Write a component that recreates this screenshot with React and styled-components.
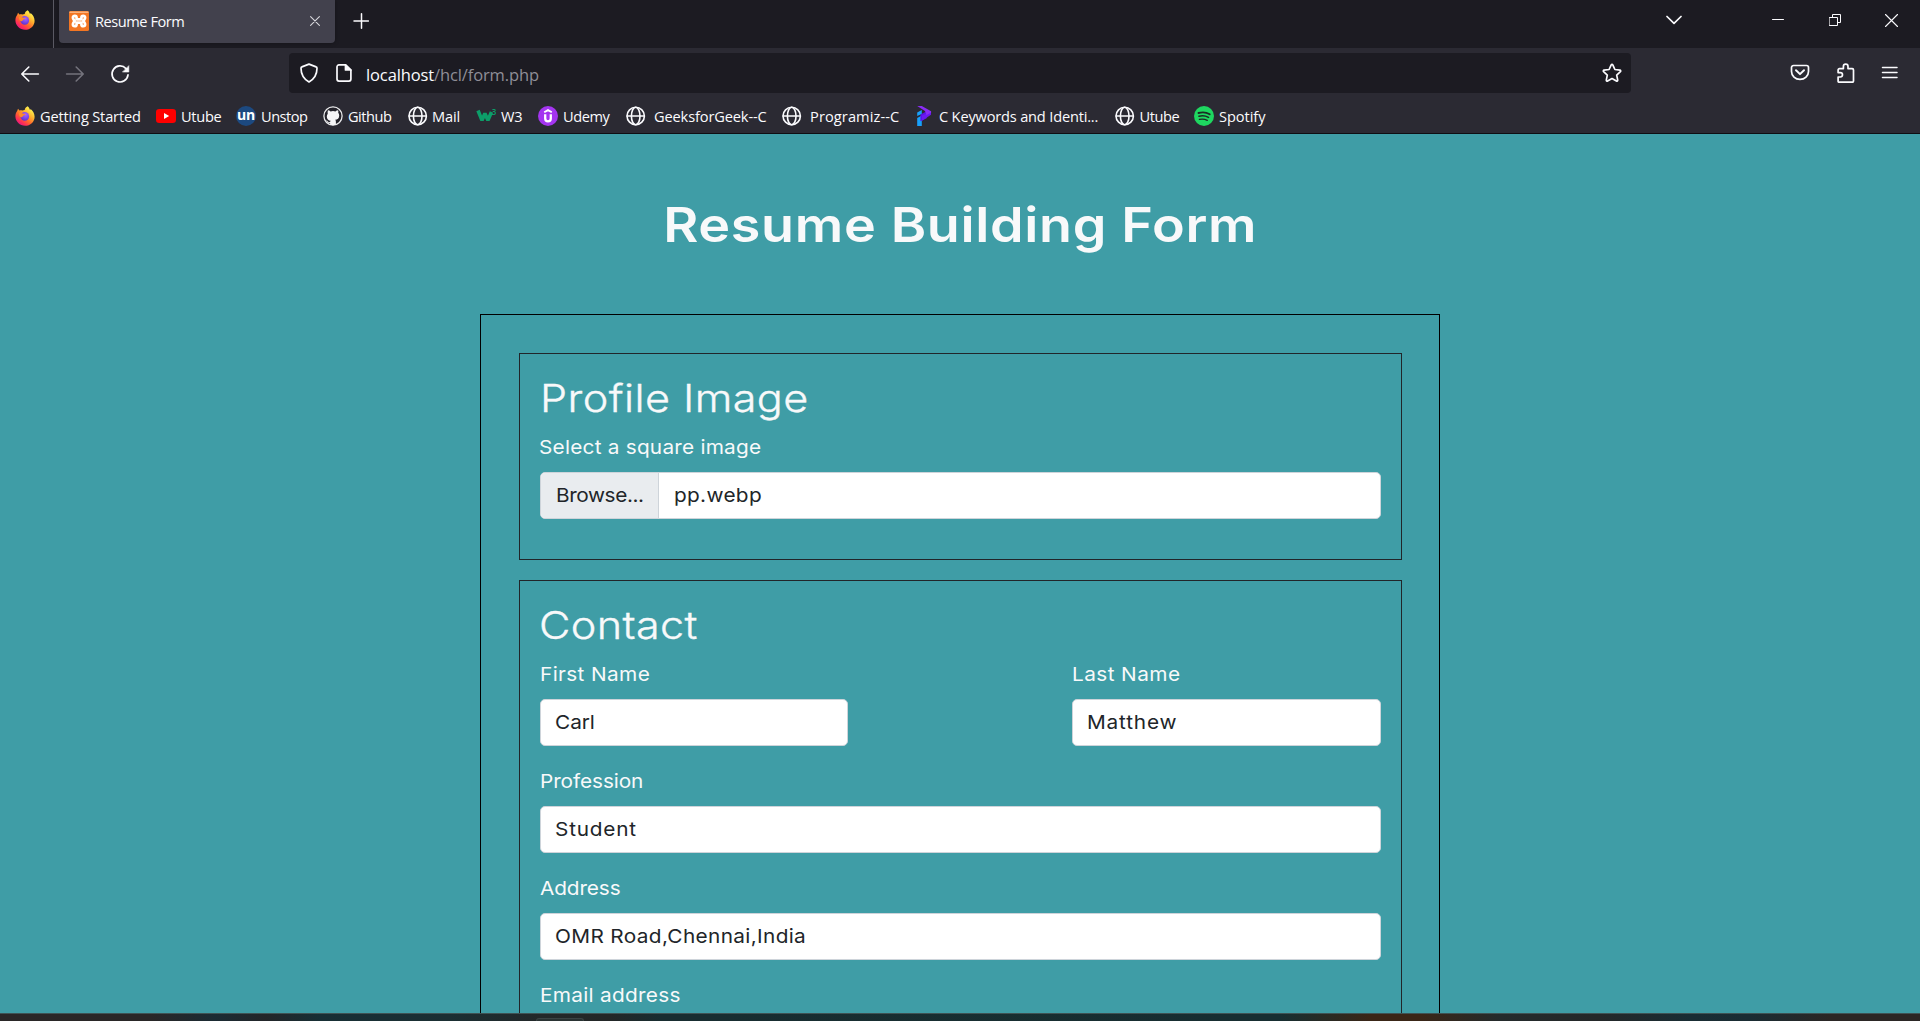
import React from "react";
import styled, { createGlobalStyle } from "styled-components";

const GlobalStyle = createGlobalStyle`
  *, *::before, *::after { box-sizing: border-box; }
  body { margin: 0; overflow: hidden; background: #3f9da6; }
`;

const Screen = styled.div`
  display: flex;
  flex-direction: column;
  width: 1920px;
  height: 1021px;
  overflow: hidden;
  font-family: "Open Sans", "Noto Sans", sans-serif;
  color: #fbfbfe;
`;

const Icon = styled.svg`
  display: block;
  flex: none;
  width: ${(p) => p.$w || 20}px;
  height: ${(p) => p.$h || p.$w || 20}px;
  fill: none;
  stroke: ${(p) => p.$color || "#fbfbfe"};
  stroke-width: ${(p) => p.$stroke || 1.6};
  stroke-linecap: round;
  stroke-linejoin: round;
`;

/* ---------- browser chrome ---------- */

const TabBar = styled.header`
  display: flex;
  flex: none;
  height: 48px;
  background: #1c1b22;
`;

const PinnedTab = styled.div`
  display: flex;
  width: 54px;
  padding: 10px 0 0 15px;
  border-right: 1px solid #5a5963;
`;

const Tab = styled.div`
  display: flex;
  align-items: center;
  width: 276px;
  height: 43px;
  margin-left: 5px;
  padding: 0 15px 1px 10px;
  border-radius: 0 0 4px 4px;
  background: #42414d;
  box-shadow: 0 0 4px rgba(0, 0, 0, 0.35);
`;

const TabTitle = styled.span`
  flex: 1;
  margin-left: 6px;
  font-size: 14.6px;
  letter-spacing: -0.458px;
  line-height: 24px;
  white-space: nowrap;
`;

const NewTab = styled.div`
  flex: 1;
  padding: 13px 0 0 18px;
`;

const WindowControls = styled.div`
  display: flex;
  align-items: center;
  height: 40px;
  padding-right: 22px;
`;

const ControlSlot = styled.div`
  margin-right: ${(p) => p.$gap || 0}px;
`;

const NavBar = styled.nav`
  display: flex;
  flex: none;
  align-items: center;
  height: 50px;
  padding-left: 20px;
  background: #2b2a33;
`;

const NavButtons = styled.div`
  display: flex;
  gap: 25px;
  width: 269px;
  padding-top: 2px;
`;

const UrlBar = styled.div`
  display: flex;
  align-items: center;
  width: 1342px;
  height: 40px;
  padding: 0 9px 0 10px;
  border-radius: 4px;
  background: #1c1b22;
`;

const PageIcon = styled.div`
  margin: 0 13px 0 16px;
`;

const Url = styled.div`
  flex: 1;
  padding-top: 3px;
  font-size: 16.5px;
  line-height: 24px;
  letter-spacing: -0.12px;
  color: #8f8e97;
  white-space: nowrap;
`;

const Host = styled.span`
  color: #fbfbfe;
`;

const NavActions = styled.div`
  display: flex;
  align-items: center;
  gap: 25.5px;
  margin-left: 159px;
`;

const Bookmarks = styled.div`
  display: flex;
  flex: none;
  align-items: center;
  height: 36px;
  padding-left: 15px;
  background: #2b2a33;
  border-bottom: 1px solid #0f0e13;
`;

const BookmarkItem = styled.div`
  display: flex;
  align-items: center;
  flex: none;
  width: ${(p) => p.$width}px;
`;

const BookmarkLabel = styled.span`
  margin-left: ${(p) => p.$indent || 5}px;
  font-size: 14.6px;
  line-height: 24px;
  letter-spacing: ${(p) => p.$spacing}px;
  white-space: nowrap;
`;

/* ---------- web page ---------- */

const Page = styled.main`
  display: flex;
  flex-direction: column;
  align-items: center;
  flex: none;
  height: 879px;
  overflow: hidden;
  background: #3f9da6;
  color: #f8f9fa;
  font-family: Inter, sans-serif;
  font-size: 19.25px;
  font-weight: 400;
  line-height: 30px;
`;

const Wide = styled.span`
  display: inline-block;
  margin-left: ${(p) => p.$shift || 0}px;
  transform: scaleX(${(p) => p.$stretch || 1.08});
  transform-origin: ${(p) => p.$origin || "left"};
  letter-spacing: ${(p) => p.$spacing || 0}px;
  white-space: nowrap;
`;

const PageTitle = styled.h1`
  margin: 0;
  padding: 61px 0 59px;
  font-size: 48.1px;
  font-weight: 600;
  line-height: 60px;
`;

const FormFrame = styled.form`
  flex: none;
  width: 960px;
  height: 1200px;
  padding: 38px 37px 38px 38px;
  border: 1px solid #000;
`;

const Section = styled.section`
  height: ${(p) => (p.$height ? p.$height + "px" : "auto")};
  margin-bottom: 20px;
  padding: 20px;
  border: 1px solid #212529;
`;

const SectionTitle = styled.h2`
  margin: 0 0 10px;
  font-size: 38.5px;
  font-weight: 300;
  line-height: 48px;
  -webkit-text-stroke: 0.35px #f8f9fa;
`;

const NameRow = styled.div`
  display: flex;
  justify-content: space-between;
`;

const Field = styled.div`
  width: ${(p) => p.$width || "100%"};
  margin-bottom: 20px;
`;

const Label = styled.label`
  display: block;
  margin-bottom: 10px;
`;

const Control = styled.div`
  display: flex;
  height: 47px;
  border: 1px solid #ced4da;
  border-radius: 5px;
  background: #fff;
  color: #212529;
  overflow: hidden;
`;

const Value = styled.div`
  padding: 7px 15px 8px;
`;

const BrowseButton = styled.div`
  width: 118px;
  padding: 7px 15px 8px;
  border-right: 1px solid #ced4da;
  background: #e9ecef;
`;

const Taskbar = styled.footer`
  flex: none;
  height: 8px;
  padding-left: 536px;
  border-top: 1px solid #3f5354;
  background: linear-gradient(
    90deg,
    #2a2727 0, #292727 150px, #1b2b33 215px, #232629 265px, #172f35 320px, #1b2f33 450px,
    #232829 540px, #232727 610px, #182d30 660px, #172e31 1280px, #3a2617 1370px,
    #3a2617 1420px, #242b2c 1500px, #242829 1600px, #192d34 1690px, #1a2c33 1750px,
    #2b2725 1830px, #2b2725 1920px
  );
`;

const TaskbarButton = styled.div`
  width: 48px;
  height: 3px;
  margin-top: 4px;
  border: 1px solid #3b4444;
  border-bottom: 0;
  border-radius: 4px 4px 0 0;
  background: #2a3333;
`;

/* ---------- icons ---------- */

function Firefox({ id }) {
  return (
    <Icon viewBox="0 0 20 20" $color="none">
      <defs>
        <linearGradient id={id + "a"} x1="0.85" y1="0.1" x2="0.2" y2="0.95">
          <stop offset="0.05" stopColor="#fff44f" />
          <stop offset="0.35" stopColor="#ffb02e" />
          <stop offset="0.6" stopColor="#ff6a2b" />
          <stop offset="0.82" stopColor="#ff2f55" />
          <stop offset="1" stopColor="#e31587" />
        </linearGradient>
        <radialGradient id={id + "b"} cx="0.6" cy="0.3" r="0.8">
          <stop offset="0" stopColor="#a964ff" />
          <stop offset="0.6" stopColor="#7542e5" />
          <stop offset="1" stopColor="#5a2fc0" />
        </radialGradient>
      </defs>
      <path
        fill={`url(#${id}a)`}
        d="M12.6 0.2C13.9 1.2 14.6 2.6 15 4c.5-.1.6-.5.6-.9 2.200 1.800 4 4.600 4 7.600 0 5.200-4.300 9.100-9.500 9.100S.4 15.600.4 10.300c0-2.300.7-4.100 1.900-5.600.1-.9.5-1.500 1-2 .2.900.6 1.400 1.100 1.700 1-.3 2-.2 2.900.2.900-.5 1.500-.7 2.400-.7.2-1.500 1.300-3 2.900-3.700z"
      />
      <circle cx="9.800" cy="10.400" r="4.300" fill={`url(#${id}b)`} />
      <path
        fill="#ff8a2a"
        d="M3.800 7.200c1.200-.6 2.700-.3 3.800.3 1 .5 2.200.2 3 .3-.2 1.200-1.500 1.500-2.400 1.900-.7.4-.6 1.300-1.400 1.600-1.600.3-2.900-1.600-3-4.100z"
      />
    </Icon>
  );
}

const Xampp = () => (
  <Icon viewBox="0 0 20 20">
    <rect width="20" height="20" rx="1.500" fill="#f37623" stroke="none" />
    <path d="M1 1.200h18" stroke="#fbb27c" strokeWidth="1.400" />
    <path
      stroke="#fff"
      strokeWidth="2.700"
      d="M7.600 8.300V6.800c0-1.300-.8-2-1.800-2s-1.900.8-1.900 1.900.8 1.700 1.700 3.300c-.9 1.600-1.700 2.200-1.700 3.300s.9 1.900 1.900 1.900 1.800-.7 1.800-2v-1.500h4.800v1.500c0 1.300.8 2 1.800 2s1.900-.8 1.900-1.900-.8-1.700-1.700-3.300c.9-1.600 1.700-2.200 1.700-3.300s-.9-1.900-1.900-1.900-1.800.7-1.800 2v1.500z"
    />
  </Icon>
);

const Youtube = () => (
  <Icon viewBox="0 0 20 20" $color="none">
    <rect x="0" y="3" width="20" height="14" rx="3.300" fill="#f00" />
    <path d="M8 7v6l5.200-3z" fill="#fff" />
  </Icon>
);

const UnstopBadge = styled.span`
  flex: none;
  width: 20px;
  height: 20px;
  border-radius: 50%;
  background: #1c4980;
  color: #fff;
  font: 700 14px/17px "Open Sans", sans-serif;
  letter-spacing: -0.3px;
  text-align: center;
`;

const Github = () => (
  <Icon viewBox="0 0 20 20">
    <circle cx="10" cy="10" r="9.100" fill="#24232b" stroke="#e8e8ea" strokeWidth="1.300" />
    <path
      stroke="none"
      fill="#f6f6f8"
      d="M4.900 4.300c1 0 1.900.5 2.700 1.100a9 9 0 0 1 4.800 0c.8-.6 1.700-1.100 2.700-1.100.4 1 .3 1.900.1 2.500.7.800 1 1.600 1 2.700 0 3-1.700 4-4 4.300.5.500.7 1.100.7 1.900v2.900a8.500 8.500 0 0 1-5.800 0v-1.600c-2.200.4-2.700-.8-3.300-1.700-.3-.4-.6-.6-.9-.8.900-.3 1.500.2 2 .9.500.7 1.100 1 2.200.7.100-.600.3-1 .6-1.300-2.300-.300-3.900-1.400-3.900-4.300 0-1.100.4-2 1-2.700-.2-.6-.3-1.500.1-3.500z"
    />
  </Icon>
);

const Globe = () => (
  <Icon viewBox="0 0 20 20" $stroke={1.6}>
    <circle cx="9.700" cy="10" r="8.700" />
    <ellipse cx="9.700" cy="10" rx="4.300" ry="8.700" />
    <path d="M1.200 10h17" />
  </Icon>
);

const LogoDigit = styled.text`
  font: 600 8px "Open Sans", sans-serif;
  fill: #0c9e69;
  stroke: none;
`;

const W3Logo = () => (
  <Icon viewBox="0 0 20 20" $color="#0c9e69">
    <path d="M2 4.500l4 9.700 2.900-6.700 3 6.700 3.600-8.200" strokeWidth="3.600" strokeLinecap="butt" strokeLinejoin="bevel" />
    <LogoDigit x="15.800" y="9">3</LogoDigit>
  </Icon>
);

const Udemy = () => (
  <Icon viewBox="0 0 20 20">
    <circle cx="10" cy="10" r="10" fill="#a435f0" stroke="none" />
    <path d="M6.200 6.300L10 4.100l3.800 2.200" stroke="#fff" strokeWidth="1.900" strokeLinecap="butt" strokeLinejoin="miter" />
    <path d="M7.200 8.200v4.400a2.800 2.800 0 0 0 5.600 0V8.200" stroke="#fff" strokeWidth="2.300" strokeLinecap="butt" />
  </Icon>
);

const Programiz = () => (
  <Icon viewBox="0 0 20 20" $color="none">
    <path fill="#18a0fb" d="M2.200 6.500l4.600-2.500v4L2.200 10zM2.200 12l4.600-2.500V20H2.200z" />
    <path fill="#5b10e8" d="M11.700 5.200v0L5.400 8.500v6.800l6.300-3z" />
    <path fill="#6a1af0" d="M7 9.500l9-4v3.200l-9 6z" />
    <path fill="#8a2cf5" d="M2.200 0h4.600l9.300 5.200v1.500l-4.600 2.300L10 5z" />
  </Icon>
);

const Spotify = () => (
  <Icon viewBox="0 0 20 20">
    <circle cx="10" cy="10" r="10" fill="#1ed760" stroke="none" />
    <path d="M4.500 7c3.800-1.100 8-.7 11.200 1.200" stroke="#1c2a24" strokeWidth="1.900" />
    <path d="M5 10.300c3.300-.9 6.600-.5 9.500 1.100" stroke="#1c2a24" strokeWidth="1.600" />
    <path d="M5.400 13.400c2.800-.7 5.400-.400 7.900 1" stroke="#1c2a24" strokeWidth="1.300" />
  </Icon>
);

const bookmarks = [
  { label: "Getting Started", icon: <Firefox id="bm" />, width: 141, spacing: -0.16 },
  { label: "Utube", icon: <Youtube />, width: 80, spacing: -0.3 },
  { label: "Unstop", icon: <UnstopBadge>un</UnstopBadge>, width: 87, spacing: -0.5 },
  { label: "Github", icon: <Github />, width: 85, spacing: -0.5 },
  { label: "Mail", icon: <Globe />, width: 68, spacing: -0.1, indent: 4 },
  { label: "W3", icon: <W3Logo />, width: 62, spacing: -0.3 },
  { label: "Udemy", icon: <Udemy />, width: 88, spacing: -0.44 },
  { label: "GeeksforGeek--C", icon: <Globe />, width: 156, spacing: -0.13, indent: 8 },
  { label: "Programiz--C", icon: <Globe />, width: 133, spacing: 0.1, indent: 8 },
  { label: "C Keywords and Identi...", icon: <Programiz />, width: 200, spacing: -0.18, indent: 4 },
  { label: "Utube", icon: <Globe />, width: 79, spacing: -0.4, indent: 4.5 },
  { label: "Spotify", icon: <Spotify />, width: 80, spacing: -0.05 },
];

function TextField({ label, labelSpacing, value, valueSpacing, width }) {
  return (
    <Field $width={width}>
      <Label>
        <Wide $spacing={labelSpacing} $shift={-0.3}>{label}</Wide>
      </Label>
      <Control>
        <Value>
          <Wide $spacing={valueSpacing} $shift={-0.8}>{value}</Wide>
        </Value>
      </Control>
    </Field>
  );
}

function Chrome() {
  return (
    <>
      <TabBar>
        <PinnedTab>
          <Firefox id="pin" />
        </PinnedTab>
        <Tab>
          <Xampp />
          <TabTitle>Resume Form</TabTitle>
          <Icon viewBox="0 0 10 10" $w={10} $stroke={1.1} $color="#d8d8dd">
            <path d="M.6.6l8.800 8.800M9.400.6L.6 9.400" />
          </Icon>
        </Tab>
        <NewTab>
          <Icon viewBox="0 0 16 16" $w={16} $stroke={1.5}>
            <path d="M8.500 .8v14.400M1 8h14.500" />
          </Icon>
        </NewTab>
        <WindowControls>
          <ControlSlot $gap={90}>
            <Icon viewBox="0 0 16 10" $w={16} $h={10} $stroke={1.7}>
              <path d="M1 1.500l7 6.800 7-6.800" />
            </Icon>
          </ControlSlot>
          <ControlSlot $gap={45}>
            <Icon viewBox="0 0 12 12" $w={12} $stroke={1}>
              <path d="M.5 5.500h11" />
            </Icon>
          </ControlSlot>
          <ControlSlot $gap={44}>
            <Icon viewBox="0 0 12 12" $w={12} $stroke={1}>
              <path d="M.5 3.500h8v8h-8zM3.500 3.500v-3h8v8h-3" strokeLinejoin="miter" />
            </Icon>
          </ControlSlot>
          <Icon viewBox="0 0 13 13" $w={13} $stroke={1.1}>
            <path d="M.5.500l12 12M12.500.5l-12 12" />
          </Icon>
        </WindowControls>
      </TabBar>

      <NavBar>
        <NavButtons>
          <Icon viewBox="0 0 20 20">
            <path d="M18.400 10H2M8.800 3L1.800 10l7 7" />
          </Icon>
          <Icon viewBox="0 0 20 20" $color="#74737c">
            <path d="M1.600 10H18M11.200 3l7 7-7 7" />
          </Icon>
          <Icon viewBox="0 0 20 20" $stroke={1.7}>
            <path d="M18 10.800a8 8 0 1 1-2-6.200l1.400 1.600" />
            <path d="M18.800 2v6h-6z" fill="#fbfbfe" strokeWidth="0.600" />
          </Icon>
        </NavButtons>
        <UrlBar>
          <Icon viewBox="0 0 20 20" $stroke={1.7}>
            <path d="M10 1.100l7.100 2.800c.6.200.9.700.9 1.300 0 5.300-2 10.300-8 13.800-6-3.500-8-8.500-8-13.800 0-.6.3-1.100.9-1.300z" />
          </Icon>
          <PageIcon>
            <Icon viewBox="0 0 18 20" $w={18} $h={20} $stroke={1.700}>
              <path d="M10.500 1.900H4a2 2 0 0 0-2 2v12.200a2 2 0 0 0 2 2h9.900a2 2 0 0 0 2-2V7z" />
              <path d="M10.500 1.900V7h5.400z" fill="#fbfbfe" />
            </Icon>
          </PageIcon>
          <Url>
            <Host>localhost</Host>/hcl/form.php
          </Url>
          <Icon viewBox="0 0 20 20" $stroke={1.7}>
            <path d="M10 1.400c.3 0 .6.200.8.500l2.100 4.600 5 .6c.8.100 1.100 1 .5 1.600l-3.700 3.400 1 5c.1.800-.7 1.300-1.300.9L10 15.600 5.600 18c-.6.400-1.400-.1-1.300-.9l1-5-3.700-3.400c-.6-.6-.3-1.500.5-1.600l5-.6 2.100-4.600c.2-.3.500-.5.800-.5z" />
          </Icon>
        </UrlBar>
        <NavActions>
          <Icon viewBox="0 0 20 20" $stroke={1.700}>
            <path d="M3.500 2.500h13a2 2 0 0 1 2 2v4a8.500 7.900 0 0 1-17 0v-4a2 2 0 0 1 2-2z" />
            <path d="M6 7.300l4 3.800 4-3.800" strokeWidth="2" />
          </Icon>
          <Icon viewBox="0 0 20 20" $stroke={1.700}>
            <path d="M2.100 18.300V14h2.200a2.200 2.200 0 0 0 0-4.400H2.100V6.900a1.300 1.300 0 0 1 1.300-1.300h4V3.400a2.300 2.300 0 0 1 4.600 0v2.200h4.200A1.300 1.300 0 0 1 17.500 6.900v11a1.300 1.300 0 0 1-1.300 1.300H3.100a1 1 0 0 1-1-.900z" />
          </Icon>
          <Icon viewBox="0 0 18 20" $w={18} $h={20} $stroke={1.500}>
            <path d="M1.500 4.500h14.500M1.500 9.500h14.500M1.500 14.500h14.500" />
          </Icon>
        </NavActions>
      </NavBar>

      <Bookmarks>
        {bookmarks.map((b, i) => (
          <BookmarkItem key={i} $width={b.width}>
            {b.icon}
            <BookmarkLabel $spacing={b.spacing} $indent={b.indent}>
              {b.label}
            </BookmarkLabel>
          </BookmarkItem>
        ))}
      </Bookmarks>
    </>
  );
}

export default function App() {
  return (
    <Screen>
      <GlobalStyle />
      <Chrome />
      <Page>
        <PageTitle>
          <Wide $spacing={0.6} $stretch={1.12} $origin="center">Resume Building Form</Wide>
        </PageTitle>
        <FormFrame>
          <Section $height={207}>
            <SectionTitle>
              <Wide $spacing={0.38} $stretch={1.12} $shift={-0.5}>Profile Image</Wide>
            </SectionTitle>
            <Field>
              <Label>
                <Wide $spacing={0.21} $shift={-0.8}>Select a square image</Wide>
              </Label>
              <Control>
                <BrowseButton>
                  <Wide $spacing={-0.37} $shift={-0.5}>Browse...</Wide>
                </BrowseButton>
                <Value>
                  <Wide $spacing={0.3} $shift={-0.5}>pp.webp</Wide>
                </Value>
              </Control>
            </Field>
          </Section>
          <Section $height={900}>
            <SectionTitle>
              <Wide $spacing={0.33} $stretch={1.12} $shift={-1}>Contact</Wide>
            </SectionTitle>
            <NameRow>
              <TextField label="First Name" labelSpacing={0.35} value="Carl" valueSpacing={-0.05} width="308px" />
              <TextField label="Last Name" labelSpacing={0.38} value="Matthew" valueSpacing={0.75} width="309px" />
            </NameRow>
            <TextField label="Profession" labelSpacing={-0.08} value="Student" valueSpacing={0.74} />
            <TextField label="Address" labelSpacing={-0.1} value="OMR Road,Chennai,India" valueSpacing={0.33} />
            <Field>
              <Label>
                <Wide $spacing={0.27} $shift={-0.3}>Email address</Wide>
              </Label>
            </Field>
          </Section>
        </FormFrame>
      </Page>
      <Taskbar>
        <TaskbarButton />
      </Taskbar>
    </Screen>
  );
}
